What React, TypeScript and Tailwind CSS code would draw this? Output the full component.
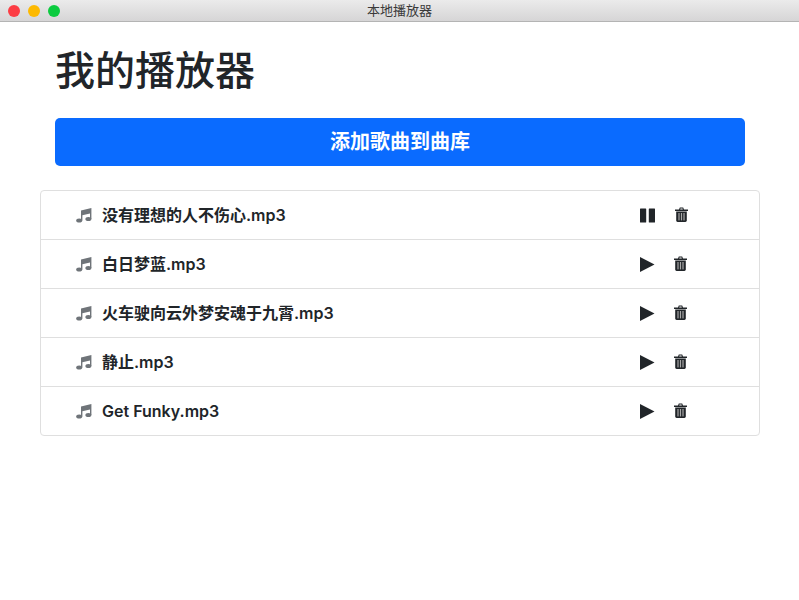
const font = { fontFamily: 'Inter, "Noto Sans CJK SC", sans-serif' };

const songs = [
  { name: '没有理想的人不伤心.mp3', playing: true },
  { name: '白日梦蓝.mp3', playing: false },
  { name: '火车驶向云外梦安魂于九霄.mp3', playing: false },
  { name: '静止.mp3', playing: false },
  { name: 'Get Funky.mp3', playing: false },
];

function MusicIcon() {
  return (
    <svg viewBox="0 0 16 16" className="mr-[10px] h-4 w-4 text-[#6f7479]" fill="currentColor">
      <ellipse cx="3.2" cy="13.6" rx="3" ry="2" />
      <ellipse cx="12.4" cy="12" rx="3" ry="2" />
      <path d="M5 13.5V3.6L15.4 1V12h-1.4V6.4L6.4 8.2V13.5Z" />
    </svg>
  );
}

function PlayIcon() {
  return (
    <svg viewBox="0 0 15 15" className="mr-[19px] h-[15px] w-[15px]" fill="currentColor">
      <path d="M0 0 14.5 7.5 0 15Z" />
    </svg>
  );
}

function PauseIcon() {
  return (
    <svg viewBox="0 0 15 15" className="mr-[20px] h-[15px] w-[15px]" fill="currentColor">
      <rect x="0" y="0.5" width="6.2" height="14" rx="0.5" />
      <rect x="8.8" y="0.5" width="6.2" height="14" rx="0.5" />
    </svg>
  );
}

function TrashIcon() {
  return (
    <svg viewBox="0 0 13 15" className="mb-px h-[15px] w-[13px]" fill="currentColor">
      <path d="M4 2.4 4.8 0.6H8.2L9 2.4H13V4H0V2.4ZM5.2 2.4H7.8L7.5 1.6H5.5Z" />
      <path d="M1.2 4.6H11.8V13.6C11.8 14.4 11.2 15 10.4 15H2.6C1.8 15 1.2 14.4 1.2 13.6Z" />
      <rect x="3.4" y="6" width="1.2" height="7.4" fill="#a8a8a8" />
      <rect x="5.9" y="6" width="1.2" height="7.4" fill="#a8a8a8" />
      <rect x="8.4" y="6" width="1.2" height="7.4" fill="#a8a8a8" />
    </svg>
  );
}

function TitleBar() {
  return (
    <div className="relative flex h-[22px] items-center justify-center border-b border-[#b4b4b4] bg-gradient-to-b from-[#ebebeb] to-[#d6d5d6]">
      <div className="absolute left-2 flex gap-2">
        <span className="h-3 w-3 rounded-full bg-[#fc3d44]" />
        <span className="h-3 w-3 rounded-full bg-[#fdb900]" />
        <span className="h-3 w-3 rounded-full bg-[#0ccb3f]" />
      </div>
      <span className="text-[13px] text-[#3a3a3a]">本地播放器</span>
    </div>
  );
}

function SongRow({ name, playing }: { name: string; playing: boolean }) {
  return (
    <li className="flex h-[49px] items-center border-b border-[#dfdfdf] pl-[35px] last:h-[48px] last:border-b-0">
      <MusicIcon />
      <span className="flex-1 text-base font-semibold text-[#212529]">{name}</span>
      <div className={playing ? 'mr-[71px] flex items-center text-[#212529]' : 'mr-[72px] flex items-center text-[#212529]'}>
        {playing ? <PauseIcon /> : <PlayIcon />}
        <TrashIcon />
      </div>
    </li>
  );
}

export default function App() {
  return (
    <div className="min-h-screen bg-white" style={font}>
      <TitleBar />
      <div className="ml-10 w-[720px]">
        <div className="px-[15px] pt-[25px]">
          <h1 className="h-[47px] text-[40px] leading-[48px] font-medium text-[#212529]">我的播放器</h1>
          <button className="mt-[24px] h-[48px] w-full rounded-[5px] bg-[#0a6bff] text-xl font-semibold text-white">
            添加歌曲到曲库
          </button>
        </div>
        <ul className="mt-[24px] rounded-[4px] border border-[#dfdfdf]">
          {songs.map((s) => (
            <SongRow key={s.name} name={s.name} playing={s.playing} />
          ))}
        </ul>
      </div>
    </div>
  );
}
